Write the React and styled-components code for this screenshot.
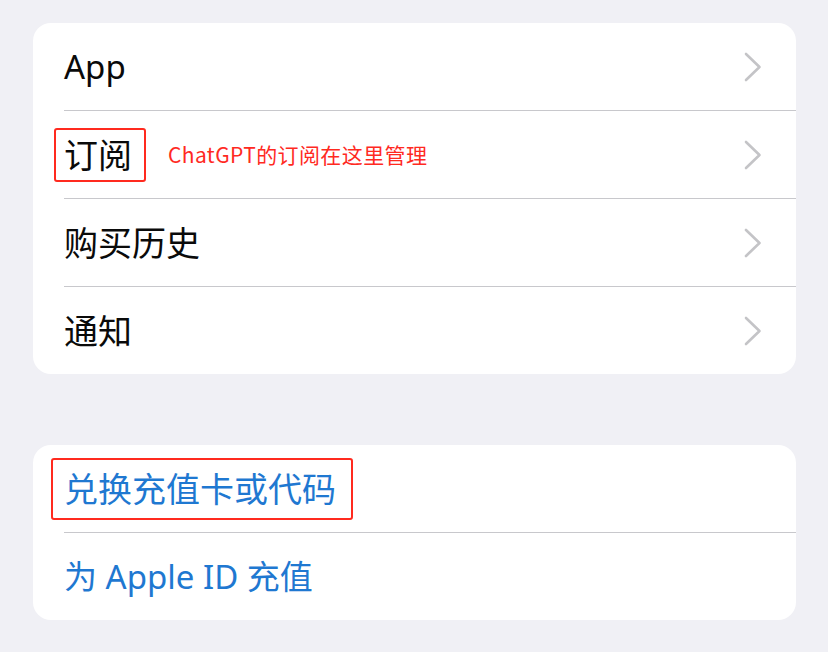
import React from "react";
import styled, { createGlobalStyle } from "styled-components";

const Global = createGlobalStyle`
  html, body { margin: 0; padding: 0; background: #f0f0f5; }
  body { font-family: "Noto Sans", "Noto Sans CJK SC", sans-serif; }
`;

const Page = styled.div`
  width: 828px;
  height: 652px;
  box-sizing: border-box;
  padding: 23px 32px 0 33px;
  display: flex;
  flex-direction: column;
  gap: 71px;
  background: #f0f0f5;
  overflow: hidden;
`;

const Card = styled.div`
  background: #ffffff;
  border-radius: 18px;
  display: flex;
  flex-direction: column;
  overflow: hidden;
`;

const Row = styled.div`
  height: 87px;
  display: flex;
  align-items: center;
  padding-left: 31px;
  padding-right: 34px;
  position: relative;
  box-sizing: border-box;
  & + & {
    height: 88px;
    padding-top: 1px;
  }
  & + &::before {
    content: "";
    position: absolute;
    top: 0;
    left: 31px;
    right: 0;
    height: 1px;
    background: #c8c8cc;
  }
`;

const Label = styled.span`
  font-family: "Noto Sans", "Noto Sans CJK SC", sans-serif;
  font-size: ${(p) => (p.$cjk ? "34px" : "33px")};
  line-height: 1;
  color: ${(p) => (p.$blue ? "#1f78d1" : "#0a0a0a")};
  flex: 1;
  display: flex;
  align-items: center;
`;

const Boxed = styled.span`
  position: relative;
  &::after {
    content: "";
    position: absolute;
    left: ${(p) => p.$l}px;
    top: ${(p) => p.$t}px;
    right: ${(p) => p.$r}px;
    bottom: ${(p) => p.$b}px;
    border: 2.5px solid #ff2a1f;
    border-radius: 3px;
  }
`;

const Note = styled.span`
  font-family: "Noto Sans CJK SC", sans-serif;
  font-size: 21px;
  color: #ff2a1f;
  margin-left: 36px;
  letter-spacing: 0.4px;
`;

const Chevron = () => (
  <svg width="18" height="30" viewBox="0 0 18 30">
    <path
      d="M2 2 L15.5 15 L2 28"
      fill="none"
      stroke="#c4c4c7"
      strokeWidth="2.6"
      strokeLinecap="round"
      strokeLinejoin="round"
    />
  </svg>
);

export default function App() {
  return (
    <>
      <Global />
      <Page>
        <Card>
          <Row>
            <Label>App</Label>
            <Chevron />
          </Row>
          <Row>
            <Label $cjk>
              <Boxed $l={-10} $t={-10} $r={-14} $b={-10}>订阅</Boxed>
              <Note>ChatGPT的订阅在这里管理</Note>
            </Label>
            <Chevron />
          </Row>
          <Row>
            <Label $cjk>购买历史</Label>
            <Chevron />
          </Row>
          <Row>
            <Label $cjk>通知</Label>
            <Chevron />
          </Row>
        </Card>
        <Card>
          <Row>
            <Label $blue $cjk>
              <Boxed $l={-13} $t={-14} $r={-17} $b={-14}>兑换充值卡或代码</Boxed>
            </Label>
          </Row>
          <Row>
            <Label $blue>为 Apple ID 充值</Label>
          </Row>
        </Card>
      </Page>
    </>
  );
}
